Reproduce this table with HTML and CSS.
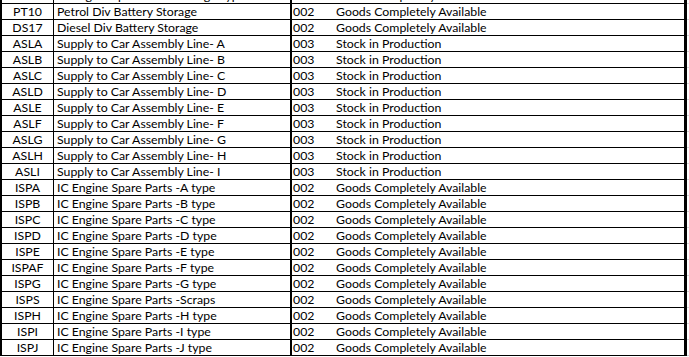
FILE: index.html
```html
<!DOCTYPE html>
<html>
<head>
<meta charset="utf-8">
<link rel="stylesheet" href="styles.css">
</head>
<body>
<div class="sheet">
  <div class="row"><div class="c a"></div><div class="c b">IC Engine Spare Parts Storage Types</div><div class="c n"></div><div class="c d">Goods Completely Available</div><div class="g"></div></div>
  <div class="row"><div class="c a">PT10</div><div class="c b">Petrol Div Battery Storage</div><div class="c n">002</div><div class="c d">Goods Completely Available</div><div class="g"></div></div>
  <div class="row"><div class="c a">DS17</div><div class="c b">Diesel Div Battery Storage</div><div class="c n">002</div><div class="c d">Goods Completely Available</div><div class="g"></div></div>
  <div class="row"><div class="c a">ASLA</div><div class="c b">Supply to Car Assembly Line- A</div><div class="c n">003</div><div class="c d">Stock in Production</div><div class="g"></div></div>
  <div class="row"><div class="c a">ASLB</div><div class="c b">Supply to Car Assembly Line- B</div><div class="c n">003</div><div class="c d">Stock in Production</div><div class="g"></div></div>
  <div class="row"><div class="c a">ASLC</div><div class="c b">Supply to Car Assembly Line- C</div><div class="c n">003</div><div class="c d">Stock in Production</div><div class="g"></div></div>
  <div class="row"><div class="c a">ASLD</div><div class="c b">Supply to Car Assembly Line- D</div><div class="c n">003</div><div class="c d">Stock in Production</div><div class="g"></div></div>
  <div class="row"><div class="c a">ASLE</div><div class="c b">Supply to Car Assembly Line- E</div><div class="c n">003</div><div class="c d">Stock in Production</div><div class="g"></div></div>
  <div class="row"><div class="c a">ASLF</div><div class="c b">Supply to Car Assembly Line- F</div><div class="c n">003</div><div class="c d">Stock in Production</div><div class="g"></div></div>
  <div class="row"><div class="c a">ASLG</div><div class="c b">Supply to Car Assembly Line- G</div><div class="c n">003</div><div class="c d">Stock in Production</div><div class="g"></div></div>
  <div class="row"><div class="c a">ASLH</div><div class="c b">Supply to Car Assembly Line- H</div><div class="c n">003</div><div class="c d">Stock in Production</div><div class="g"></div></div>
  <div class="row"><div class="c a">ASLI</div><div class="c b">Supply to Car Assembly Line- I</div><div class="c n">003</div><div class="c d">Stock in Production</div><div class="g"></div></div>
  <div class="row"><div class="c a">ISPA</div><div class="c b">IC Engine Spare Parts -A type</div><div class="c n">002</div><div class="c d">Goods Completely Available</div><div class="g"></div></div>
  <div class="row"><div class="c a">ISPB</div><div class="c b">IC Engine Spare Parts -B type</div><div class="c n">002</div><div class="c d">Goods Completely Available</div><div class="g"></div></div>
  <div class="row"><div class="c a">ISPC</div><div class="c b">IC Engine Spare Parts -C type</div><div class="c n">002</div><div class="c d">Goods Completely Available</div><div class="g"></div></div>
  <div class="row"><div class="c a">ISPD</div><div class="c b">IC Engine Spare Parts -D type</div><div class="c n">002</div><div class="c d">Goods Completely Available</div><div class="g"></div></div>
  <div class="row"><div class="c a">ISPE</div><div class="c b">IC Engine Spare Parts -E type</div><div class="c n">002</div><div class="c d">Goods Completely Available</div><div class="g"></div></div>
  <div class="row"><div class="c a">ISPAF</div><div class="c b">IC Engine Spare Parts -F type</div><div class="c n">002</div><div class="c d">Goods Completely Available</div><div class="g"></div></div>
  <div class="row"><div class="c a">ISPG</div><div class="c b">IC Engine Spare Parts -G type</div><div class="c n">002</div><div class="c d">Goods Completely Available</div><div class="g"></div></div>
  <div class="row"><div class="c a">ISPS</div><div class="c b">IC Engine Spare Parts -Scraps</div><div class="c n">002</div><div class="c d">Goods Completely Available</div><div class="g"></div></div>
  <div class="row"><div class="c a">ISPH</div><div class="c b">IC Engine Spare Parts -H type</div><div class="c n">002</div><div class="c d">Goods Completely Available</div><div class="g"></div></div>
  <div class="row"><div class="c a">ISPI</div><div class="c b">IC Engine Spare Parts -I type</div><div class="c n">002</div><div class="c d">Goods Completely Available</div><div class="g"></div></div>
  <div class="row"><div class="c a">ISPJ</div><div class="c b">IC Engine Spare Parts -J type</div><div class="c n">002</div><div class="c d">Goods Completely Available</div><div class="g"></div></div>
</div>
</body>
</html>
```
FILE: styles.css
```css
html, body {
  margin: 0;
  padding: 0;
  background: #fff;
}
body {
  overflow: hidden;
  font-family: Lato, "Liberation Sans", Arial, sans-serif;
  font-size: 12.3px;
  color: #000;
}
.sheet {
  margin-top: -12px;
  width: 689px;
}
.row {
  display: grid;
  grid-template-columns: 54px 238px 42px 353px 2px;
  height: 16px;
}
.c {
  box-sizing: border-box;
  height: 16px;
  border-bottom: 1px solid #000;
  line-height: 15px;
  white-space: nowrap;
  overflow: hidden;
}
.a {
  border-left: 2px solid #000;
  border-right: 1px solid #000;
  text-align: center;
}
.b {
  border-right: 2px solid #000;
  padding-left: 3px;
}
.n {
  padding-left: 1px;
}
.d {
  border-right: 3px solid #000;
  padding-left: 2px;
}
.g {
  box-sizing: border-box;
  height: 16px;
  border-bottom: 1px solid #d4d4d4;
}
```
